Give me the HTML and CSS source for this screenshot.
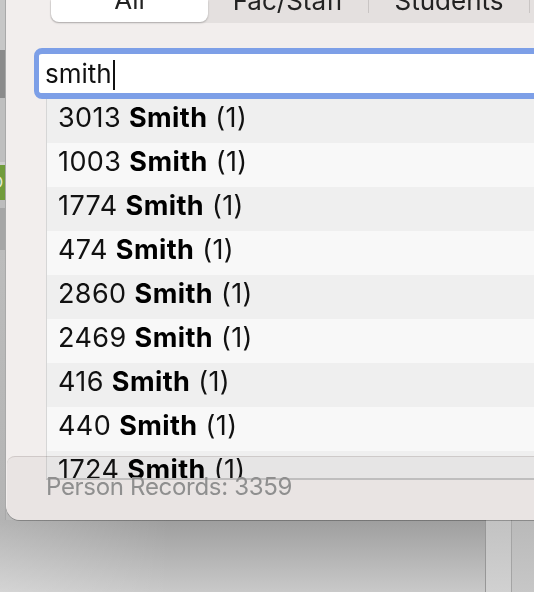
FILE: index.html
```html
<!DOCTYPE html>
<html lang="en">
<head>
<meta charset="utf-8">
<title>Person Records</title>
<link rel="stylesheet" href="styles.css">
</head>
<body>
<div class="screen">
  <div class="top">
    <div class="strip">
      <div class="blk b1"></div>
      <div class="blk b2"></div>
      <div class="blk b3"></div>
      <div class="blk b4"></div>
      <div class="blk b5"><span class="glyph">O</span></div>
      <div class="blk b6"></div>
      <div class="blk b7"></div>
      <div class="blk b8"></div>
    </div>
    <div class="panel">
      <div class="seg">
        <div class="tab active">All</div>
        <div class="tab">Fac/Staff</div>
        <div class="sep"></div>
        <div class="tab">Students</div>
        <div class="sep"></div>
        <div class="tab"></div>
      </div>
      <div class="search"><span class="query">smith</span><span class="caret"></span></div>
      <div class="list">
        <div class="row">3013 <b>Smith</b> (1)</div>
        <div class="row">1003 <b>Smith</b> (1)</div>
        <div class="row">1774 <b>Smith</b> (1)</div>
        <div class="row">474 <b>Smith</b> (1)</div>
        <div class="row">2860 <b>Smith</b> (1)</div>
        <div class="row">2469 <b>Smith</b> (1)</div>
        <div class="row">416 <b>Smith</b> (1)</div>
        <div class="row">440 <b>Smith</b> (1)</div>
        <div class="row">1724 <b>Smith</b> (1)</div>
      </div>
      <div class="footer"><span class="count">Person Records: 3359</span></div>
    </div>
  </div>
  <div class="below">
    <div class="col c1"></div>
    <div class="col c2"></div>
    <div class="col c3"></div>
  </div>
</div>
</body>
</html>
```
FILE: styles.css
```css
html, body {
  margin: 0;
  padding: 0;
}
body {
  width: 534px;
  height: 592px;
  overflow: hidden;
  font-family: "Inter", "Liberation Sans", sans-serif;
  background: #c0c0c0;
}
.screen {
  width: 534px;
  height: 592px;
  overflow: hidden;
  display: flex;
  flex-direction: column;
}
.top {
  display: flex;
  height: 520px;
  flex: none;
  background: #b9b9b9;
}
.strip {
  width: 5px;
  flex: none;
  display: flex;
  flex-direction: column;
  border-right: 1px solid #a9a9a9;
}
.blk { flex: none; overflow: hidden; }
.b1 { height: 50px; background: #c7c7c7; }
.b2 { height: 48px; background: #8b8b8b; }
.b3 { height: 64px; background: #bfbfbf; }
.b4 { height: 3px; background: #cfcfcf; }
.b5 { height: 35px; background: #719c3c; position: relative; }
.b6 { height: 8px; background: #bdbdbd; }
.b7 { height: 42px; background: #a6a6a6; }
.b8 { flex: 1; background: linear-gradient(#bcbcbc, #b4b4b4); }
.glyph {
  display: block;
  color: #e3ebd8;
  font-size: 16px;
  line-height: 35px;
  margin-left: -9px;
}
.panel {
  position: relative;
  z-index: 1;
  width: 560px;
  flex: none;
  background: #f2eeed;
  border-bottom-left-radius: 14px;
  overflow: hidden;
  box-shadow: 0 1px 0 rgba(0,0,0,0.25);
}
.seg {
  display: flex;
  height: 23px;
  margin-left: 44px;
  background: #e4e0df;
  border-bottom-left-radius: 8px;
}
.tab {
  flex: none;
  width: 160px;
  height: 23px;
  box-sizing: border-box;
  display: flex;
  align-items: flex-end;
  justify-content: center;
  padding-bottom: 9px;
  font-size: 26px;
  line-height: 26px;
  color: #222;
}
.tab.active {
  width: 157px;
  height: 22px;
  margin: 0 0 1px 1px;
  background: #fff;
  border-radius: 0 0 8px 8px;
  box-shadow: 0 1px 2px rgba(0,0,0,0.25);
}
.tab.active + .tab {
  width: 159px;
  margin-left: 1px;
}
.sep {
  flex: none;
  width: 1px;
  height: 13px;
  background: #c9c5c4;
}
.search {
  margin: 25px 0 0 28px;
  height: 38px;
  padding: 1px 0 0 6px;
  border-style: solid;
  border-color: #7d9fe7;
  border-width: 6px 5px 6px 5px;
  border-radius: 8px;
  background: #fff;
  font-size: 26px;
  line-height: 38px;
  color: #111;
  white-space: nowrap;
}
.caret {
  display: inline-block;
  width: 2px;
  height: 30px;
  margin-left: 1px;
  background: #111;
  vertical-align: -7px;
}
.list {
  margin-left: 40px;
  height: 379px;
  overflow: hidden;
  border-left: 1px solid #d6d6d6;
  border-bottom: 2px solid #c6c6c6;
}
.row {
  height: 38px;
  padding: 0 0 6px 11px;
  font-size: 27px;
  letter-spacing: 0.4px;
  line-height: 38px;
  color: #111;
  background: #efefef;
  white-space: nowrap;
}
.row:nth-child(even) { background: #f8f8f8; }
.row b { font-weight: 700; color: #000; }
.footer {
  position: absolute;
  left: 1px;
  right: 0;
  bottom: 0;
  height: 64px;
  box-sizing: border-box;
  padding: 19px 0 0 39px;
}
.footer::before {
  content: "";
  position: absolute;
  inset: 0;
  background: #f6f5f5;
  mix-blend-mode: multiply;
  border-top: 1px solid #dcd8d7;
  border-top-left-radius: 8px;
}
.count {
  position: relative;
  display: block;
  font-size: 24px;
  letter-spacing: -0.3px;
  line-height: 24px;
  color: #8f8f8f;
  white-space: nowrap;
}
.below {
  flex: 1;
  display: flex;
}
.col { height: 100%; }
.c1 {
  width: 485px;
  background:
    linear-gradient(to right, rgba(255,255,255,0.22), rgba(255,255,255,0) 35%),
    linear-gradient(#9e9e9e, #c9c9c9);
}
.c2 {
  width: 25px;
  border-left: 1px solid #979797;
  border-right: 1px solid #a4a4a4;
  background: linear-gradient(#c2c2c2, #d1d1d1);
}
.c3 {
  flex: 1;
  background: linear-gradient(#b9b9b9, #c7c7c7);
}
```
